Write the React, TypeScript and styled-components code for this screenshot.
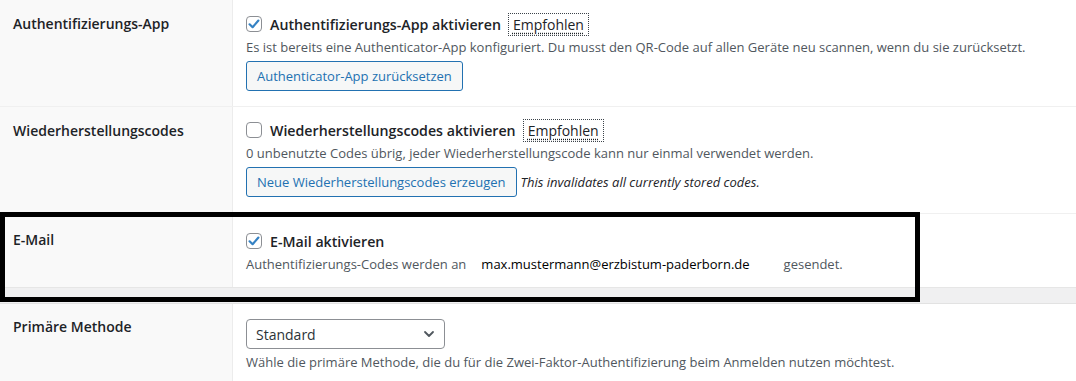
import React from "react";
import styled, { createGlobalStyle } from "styled-components";

const Global = createGlobalStyle`
  html, body { margin: 0; padding: 0; background: #ffffff; }
  body { font-family: "Open Sans", "Noto Sans", "Liberation Sans", sans-serif; color: #1d2327; }
  * { box-sizing: border-box; }
`;

const Page = styled.div`
  position: relative;
  width: 1076px;
  height: 381px;
  overflow: hidden;
  background: #ffffff;
`;

const Table = styled.div`
  display: flex;
  flex-direction: column;
`;

const Row = styled.div<{ $pt: number; $pb: number; $border?: boolean }>`
  display: grid;
  grid-template-columns: 233px 1fr;
  border-bottom: ${(p) => (p.$border ? "1px solid #f0f0f0" : "none")};
  & > div:last-child {
    padding-top: ${(p) => p.$pt}px;
    padding-bottom: ${(p) => p.$pb}px;
  }
`;

const Label = styled.div<{ $pt: number }>`
  background: #f9f9f9;
  border-right: 1px solid #ececec;
  padding: ${(p) => p.$pt}px 10px 0 13px;
  font-size: 14px;
  line-height: 20px;
  font-weight: 600;
  color: #1d2327;
`;

const Cell = styled.div`
  padding-left: 13px;
  display: flex;
  flex-direction: column;
  align-items: flex-start;
`;

const CheckLine = styled.label`
  display: flex;
  align-items: center;
  height: 24px;
  gap: 8px;
  font-size: 14.2px;
  font-weight: 600;
  color: #1d2327;
`;

const Box = styled.span`
  width: 16px;
  height: 16px;
  border: 1px solid #8c8f94;
  border-radius: 4px;
  background: #fff;
  display: inline-flex;
  align-items: center;
  justify-content: center;
  flex: none;
`;

const Badge = styled.span`
  margin-left: -1px;
  border: 1px dotted #3c434a;
  padding: 0 4px;
  height: 23px;
  display: inline-flex;
  align-items: center;
  font-size: 14px;
  font-weight: 400;
  color: #1d2327;
  text-decoration: underline dotted;
  text-underline-offset: 3px;
`;

const Desc = styled.p<{ $mt?: number }>`
  margin: ${(p) => p.$mt ?? 2}px 0 0;
  font-size: 13px;
  line-height: 18px;
  color: #50575e;
  white-space: nowrap;
`;

const ActionLine = styled.div`
  margin-top: 5px;
  display: flex;
  align-items: center;
  gap: 4px;
`;

const Button = styled.button`
  height: 30px;
  padding: 0 10px;
  border: 1px solid #2271b1;
  border-radius: 3px;
  background: #f6f7f7;
  color: #2271b1;
  font-family: inherit;
  font-size: 13px;
  line-height: 28px;
`;

const Note = styled.span`
  font-size: 13px;
  font-style: italic;
  color: #1d2327;
`;

const Email = styled.span`
  color: #000;
  margin: 0 34px 0 15px;
`;

const Gap = styled.div`
  height: 17px;
  background: #f0f0f1;
  border-top: 1px solid #e6e6e6;
  border-bottom: 1px solid #e2e2e2;
`;

const Select = styled.div`
  width: 199px;
  height: 30px;
  border: 1px solid #8c8f94;
  border-radius: 4px;
  display: flex;
  align-items: center;
  justify-content: space-between;
  padding: 0 8px 0 9px;
  font-size: 14px;
  color: #2c3338;
  background: #fff;
`;

const Highlight = styled.div`
  position: absolute;
  left: 0;
  top: 212px;
  width: 920px;
  height: 90px;
  border: 5px solid #000;
  pointer-events: none;
`;

const Check = ({ checked }: { checked: boolean }) => (
  <Box>
    {checked && (
      <svg width="14" height="14" viewBox="0 0 14 14">
        <path d="M2.6 7.3 L5.6 10.2 L11.4 3.6" fill="none" stroke="#3582c4" strokeWidth="2.2" strokeLinecap="round" strokeLinejoin="round" />
      </svg>
    )}
  </Box>
);

export default function App() {
  return (
    <Page>
      <Global />
      <Table>
        <Row $pt={12} $pb={15} $border>
          <Label $pt={14}>Authentifizierungs-App</Label>
          <Cell>
            <CheckLine>
              <Check checked />
              Authentifizierungs-App aktivieren
              <Badge>Empfohlen</Badge>
            </CheckLine>
            <Desc>
              Es ist bereits eine Authenticator-App konfiguriert. Du musst den QR-Code auf allen Geräte neu scannen, wenn du sie zurücksetzt.
            </Desc>
            <ActionLine>
              <Button>Authenticator-App zurücksetzen</Button>
            </ActionLine>
          </Cell>
        </Row>
        <Row $pt={11} $pb={16} $border>
          <Label $pt={14}>Wiederherstellungscodes</Label>
          <Cell>
            <CheckLine>
              <Check checked={false} />
              Wiederherstellungscodes aktivieren
              <Badge>Empfohlen</Badge>
            </CheckLine>
            <Desc>0 unbenutzte Codes übrig, jeder Wiederherstellungscode kann nur einmal verwendet werden.</Desc>
            <ActionLine>
              <Button>Neue Wiederherstellungscodes erzeugen</Button>
              <Note>This invalidates all currently stored codes.</Note>
            </ActionLine>
          </Cell>
        </Row>
        <Row $pt={15} $pb={14}>
          <Label $pt={16}>E-Mail</Label>
          <Cell>
            <CheckLine>
              <Check checked />
              E-Mail aktivieren
            </CheckLine>
            <Desc $mt={2}>
              Authentifizierungs-Codes werden an<Email>max.mustermann@erzbistum-paderborn.de</Email>gesendet.
            </Desc>
          </Cell>
        </Row>
        <Gap />
        <Row $pt={15} $pb={10}>
          <Label $pt={13}>Primäre Methode</Label>
          <Cell>
            <Select>
              Standard
              <svg width="14" height="14" viewBox="0 0 14 14">
                <path d="M3 5 L7 9 L11 5" fill="none" stroke="#50575e" strokeWidth="1.8" strokeLinecap="round" strokeLinejoin="round" />
              </svg>
            </Select>
            <Desc $mt={4}>Wähle die primäre Methode, die du für die Zwei-Faktor-Authentifizierung beim Anmelden nutzen möchtest.</Desc>
          </Cell>
        </Row>
      </Table>
      <Highlight />
    </Page>
  );
}
